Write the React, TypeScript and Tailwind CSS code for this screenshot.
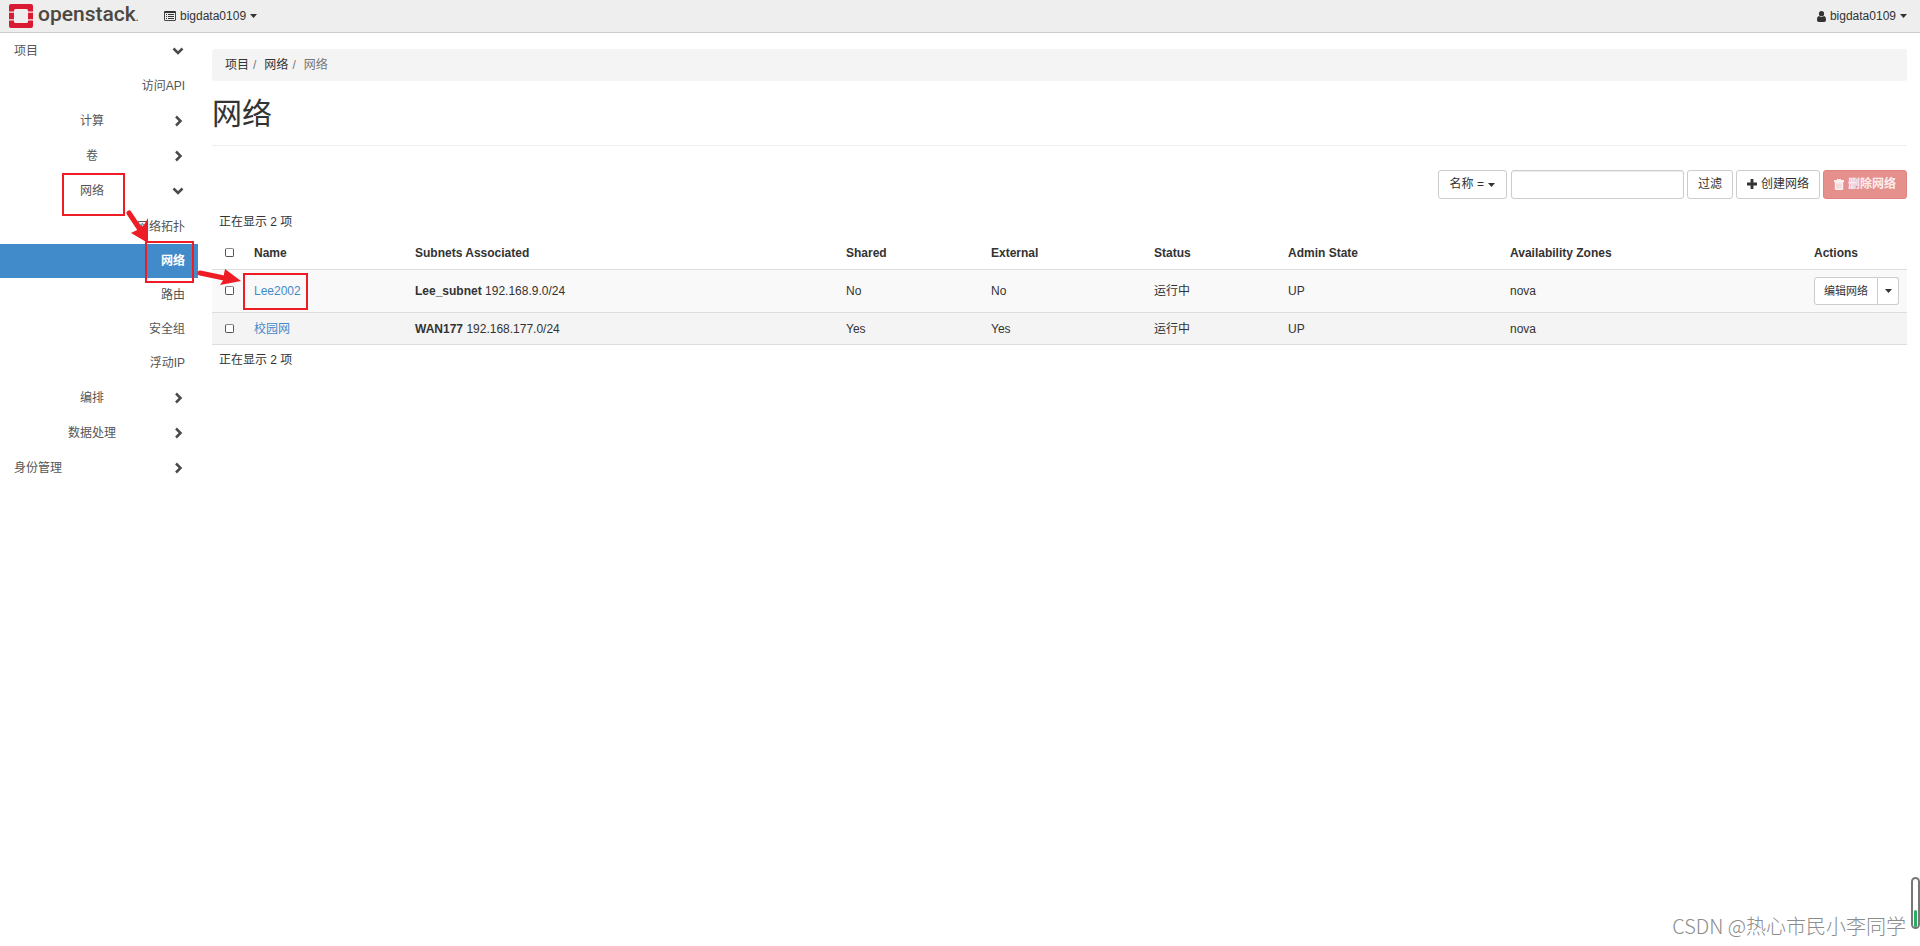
import type { ReactNode } from 'react'
import clsx from 'clsx'

const LEE = { name: 'Lee2002', subnet: 'Lee_subnet', cidr: '192.168.9.0/24', shared: 'No', external: 'No', editable: true }
const WAN = { name: '校园网', subnet: 'WAN177', cidr: '192.168.177.0/24', shared: 'Yes', external: 'Yes', editable: false }
const networks = [LEE, WAN]

const columns = [
  { label: 'Name', width: 'w-[161px]' },
  { label: 'Subnets Associated', width: 'w-[431px]' },
  { label: 'Shared', width: 'w-[145px]' },
  { label: 'External', width: 'w-[163px]' },
  { label: 'Status', width: 'w-[134px]' },
  { label: 'Admin State', width: 'w-[222px]' },
  { label: 'Availability Zones', width: 'w-[304px]' },
  { label: 'Actions', width: 'w-[101px]' },
]

function Caret() {
  return (
    <svg className="w-[7px] h-1 shrink-0" viewBox="0 0 7 4" fill="currentColor">
      <path d="M0 0h7L3.5 4z" />
    </svg>
  )
}

function Chevron({ open }: { open?: boolean }) {
  return (
    <svg className="w-3 h-3 shrink-0" viewBox="0 0 12 12" fill="none" stroke="#4a4a4a" strokeWidth="2.5">
      <path d={open ? 'M1.5 3.5 6 8l4.5-4.5' : 'M4 1.5 8.5 6 4 10.5'} />
    </svg>
  )
}

function OpenStackLogo() {
  return (
    <svg className="w-6 h-6 shrink-0" viewBox="0 0 24 24" fill="#da1a32">
      <path d="M2 0h20a2 2 0 0 1 2 2v5.5h-5V6.5a1.5 1.5 0 0 0-1.5-1.5h-11A1.5 1.5 0 0 0 5 6.5v1H0V2a2 2 0 0 1 2-2z" />
      <path d="M0 8.7h5v6.6H0zM19 8.7h5v6.6h-5z" />
      <path d="M0 16.5h5v1A1.5 1.5 0 0 0 6.5 19h11a1.5 1.5 0 0 0 1.5-1.5v-1h5V22a2 2 0 0 1-2 2H2a2 2 0 0 1-2-2z" />
    </svg>
  )
}

function ListIcon() {
  return (
    <svg className="w-3 h-[10px] shrink-0" viewBox="0 0 12 10">
      <rect x="0.5" y="0.5" width="11" height="9" rx="0.5" fill="none" stroke="#444" />
      <path d="M0.5 1h11" stroke="#333" strokeWidth="2" />
      <path d="M2 3.5h1M4 3.5h6M2 5.5h1M4 5.5h6M2 7.5h1M4 7.5h6" stroke="#333" />
    </svg>
  )
}

function UserIcon() {
  return (
    <svg className="w-[9px] h-[11px] shrink-0" viewBox="0 0 9 11" fill="currentColor">
      <circle cx="4.5" cy="2.7" r="2.6" />
      <path d="M2 5c1.4 1.3 3.6 1.3 5 0 1.5.3 2 1.8 2 3.8C9 10.3 8.2 11 7.2 11H1.8C.8 11 0 10.3 0 8.8 0 6.8.5 5.3 2 5z" />
    </svg>
  )
}

function PlusIcon() {
  return (
    <svg className="mb-px w-[10px] h-[10px] shrink-0" viewBox="0 0 10 10" fill="currentColor">
      <path d="M3.6 0h2.8v3.6H10v2.8H6.4V10H3.6V6.4H0V3.6h3.6z" />
    </svg>
  )
}

function TrashIcon() {
  return (
    <svg className="mb-px w-[10px] h-[11px] shrink-0" viewBox="0 0 10 11" fill="currentColor">
      <path d="M3 0h4v1h3v2H0V1h3z" />
      <path d="M.8 3h8.400v7a1 1 0 0 1-1 1H1.800a1 1 0 0 1-1-1z" />
      <path d="M3 4.500v5M5 4.500v5M7 4.500v5" stroke="#e6908d" strokeWidth="0.4" />
    </svg>
  )
}

function Group({ label, open, root }: { label: string; open?: boolean; root?: boolean }) {
  return (
    <button className="flex w-full h-[35px] items-center pr-[14px] text-[#555]">
      <span className={clsx('flex-1 pt-0.5', root ? 'pl-[14px] text-left' : 'pl-3 text-center')}>{label}</span>
      <Chevron open={open} />
    </button>
  )
}

function Leaf({ label, active }: { label: string; active?: boolean }) {
  return (
    <li>
      <a
        href="#"
        className={clsx(
          'flex h-[34px] items-center justify-end pr-[13px]',
          active ? 'bg-[#428bca] font-bold text-white' : 'text-[#555]',
        )}
      >
        {label}
      </a>
    </li>
  )
}

function Sidebar() {
  return (
    <nav className="w-[198px] shrink-0">
      <Group label="项目" open root />
      <ul className="pt-px">
        <Leaf label="访问API" />
      </ul>
      <Group label="计算" />
      <Group label="卷" />
      <Group label="网络" open />
      <ul className="pt-0.5">
        <Leaf label="网络拓扑" />
        <Leaf label="网络" active />
        <Leaf label="路由" />
        <Leaf label="安全组" />
        <Leaf label="浮动IP" />
      </ul>
      <Group label="编排" />
      <Group label="数据处理" />
      <Group label="身份管理" root />
    </nav>
  )
}

function Button({ children, className }: { children: ReactNode; className: string }) {
  return (
    <button className={clsx('flex h-[29px] items-center justify-center gap-1 rounded-[3px] border', className)}>
      {children}
    </button>
  )
}

function Check({ label }: { label: string }) {
  return (
    <input
      type="checkbox"
      aria-label={label}
      className="block w-[9px] h-[9px] appearance-none rounded-[2px] border border-[#555] border-t-[#888] bg-white"
    />
  )
}

function NetworkTable() {
  return (
    <table className="w-full table-fixed text-left">
      <thead>
        <tr className="h-8 border-b border-[#ddd]">
          <th className="w-[34px] pl-[13px]">
            <Check label="全选" />
          </th>
          {columns.map((c) => (
            <th key={c.label} className={clsx('px-2 pt-px font-bold', c.width)}>
              {c.label}
            </th>
          ))}
        </tr>
      </thead>
      <tbody>
        {networks.map((n) => (
          <tr
            key={n.name}
            className={clsx('border-b border-[#ddd]', n.editable ? 'h-[43px] bg-[#f9f9f9]' : 'h-8 bg-[#f4f4f4]')}
          >
            <td className="pl-[13px]">
              <Check label={n.name} />
            </td>
            <td className="px-2 pt-0.5">
              <a href="#" className="text-[#428bca]">
                {n.name}
              </a>
            </td>
            <td className="px-2 pt-0.5">
              <b>{n.subnet}</b> {n.cidr}
            </td>
            <td className="px-2 pt-0.5">{n.shared}</td>
            <td className="px-2 pt-0.5">{n.external}</td>
            <td className="px-2 pt-0.5">运行中</td>
            <td className="px-2 pt-0.5">UP</td>
            <td className="px-2 pt-0.5">nova</td>
            <td className="px-2">
              {n.editable && (
                <div className="flex h-7 text-[11px]">
                  <button className="flex-1 whitespace-nowrap rounded-l-[3px] border border-[#ccc] bg-white pt-px">
                    编辑网络
                  </button>
                  <button
                    aria-label="更多操作"
                    className="flex w-[21px] items-center justify-center rounded-r-[3px] border border-l-0 border-[#ccc] bg-white"
                  >
                    <Caret />
                  </button>
                </div>
              )}
            </td>
          </tr>
        ))}
      </tbody>
    </table>
  )
}

// red boxes and arrows pointing out the click path
function Annotations() {
  return (
    <svg
      className="pointer-events-none absolute left-0 top-0 w-[330px] h-[330px]"
      viewBox="0 0 330 330"
      fill="none"
      stroke="#ee1c25"
      strokeWidth="2"
    >
      <rect x="63" y="174" width="61" height="41" />
      <rect x="146" y="242" width="47" height="40" />
      <rect x="244" y="274" width="63" height="35" />
      <path d="M129 213l10 15M200 273l24 5" strokeWidth="5" strokeLinecap="round" />
      <path d="M148 243l-17-10 8-4 5-4 4-7z" fill="#ee1c25" stroke="none" />
      <path d="M241 281l-21 4 4-6v-5l1-5z" fill="#ee1c25" stroke="none" />
    </svg>
  )
}

export default function App() {
  return (
    <div className="relative min-h-screen bg-white font-['Liberation_Sans','Noto_Sans_CJK_SC',sans-serif] text-[12px] leading-[17px] text-[#333]">
      <header className="flex h-[33px] items-center border-b border-[#ccc] bg-[#eee] pl-[9px] pr-[13px]">
        <a href="#" className="flex items-center gap-[5px]">
          <OpenStackLogo />
          <span className="w-[120px] font-['Roboto','Open_Sans',sans-serif] text-[21px] font-medium leading-6 text-[#4d4741]">
            openstack<span className="text-[10px]">.</span>
          </span>
        </a>
        <button className="flex items-center gap-1 pl-[6px]">
          <ListIcon />
          bigdata0109
          <Caret />
        </button>
        <button className="ml-auto flex items-center gap-1">
          <UserIcon />
          bigdata0109
          <Caret />
        </button>
      </header>

      <div className="flex">
        <Sidebar />
        <main className="min-w-0 flex-1 pl-[14px] pr-[13px] pt-4">
          <ol className="flex h-8 items-center rounded-[3px] bg-[#f4f4f4] px-[13px]">
            <li>
              <a href="#">项目</a>
              <span className="pl-1 pr-2 text-[#777]">/</span>
            </li>
            <li>
              <a href="#">网络</a>
              <span className="pl-1 pr-2 text-[#777]">/</span>
            </li>
            <li className="text-[#777]">网络</li>
          </ol>
          <h1 className="h-[65px] border-b border-[#eee] pt-4 text-[30px] leading-[33px]">网络</h1>

          <div className="flex justify-end gap-[3px] pt-6">
            <Button className="border-[#ccc] bg-white px-[11px]">
              名称 =
              <Caret />
            </Button>
            <input
              aria-label="过滤条件"
              className="ml-px h-[29px] w-[173px] rounded-[3px] border border-[#ccc] bg-white px-2 shadow-[inset_0_1px_1px_rgba(0,0,0,0.075)]"
            />
            <Button className="border-[#ccc] bg-white px-[10px]">过滤</Button>
            <Button className="border-[#ccc] bg-white px-[10px]">
              <PlusIcon />
              创建网络
            </Button>
            <Button className="border-[#e08380] bg-[#e6908d] px-[10px] font-bold text-[#fbeeee]">
              <TrashIcon />
              删除网络
            </Button>
          </div>

          <p className="px-[7px] pb-[6px] pt-[15px]">正在显示 2 项</p>
          <NetworkTable />
          <p className="px-[7px] pt-[7px]">正在显示 2 项</p>
        </main>
      </div>

      <Annotations />
      <div className="absolute bottom-[17px] right-0 flex h-[52px] w-[9px] items-end justify-center rounded-full border-2 border-[#777] bg-white">
        <div className="h-[17px] w-[3px] rounded-full bg-[#27ae60]" />
      </div>
      <p className="absolute bottom-2 right-[14px] font-['Noto_Sans_CJK_SC',sans-serif] text-[20px] font-light leading-6 text-[#8c8c8c]">
        CSDN @热心市民小李同学
      </p>
    </div>
  )
}
